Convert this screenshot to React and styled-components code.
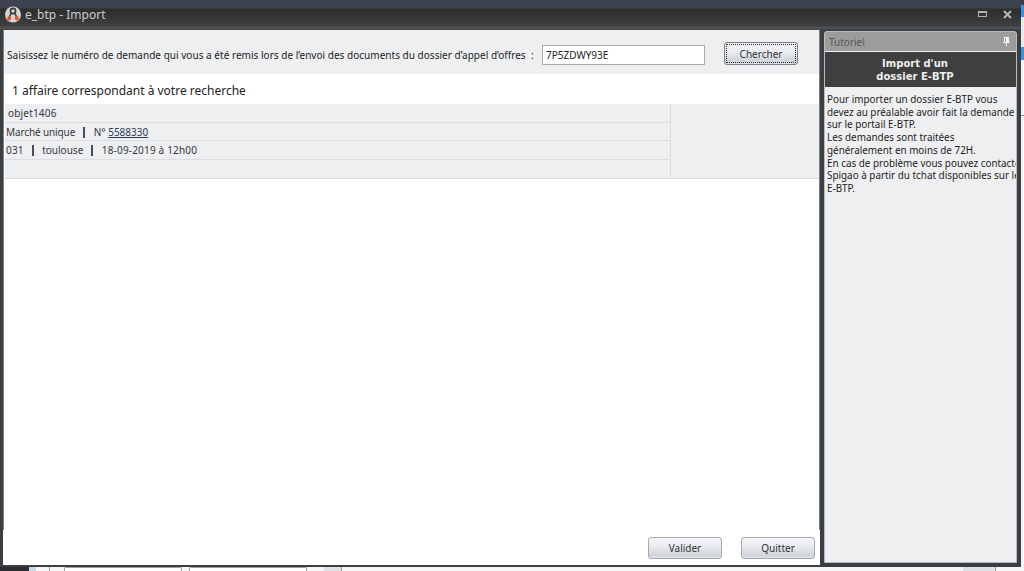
import React from 'react';
import styled, { createGlobalStyle } from 'styled-components';

const GlobalStyle = createGlobalStyle`
  html, body { margin: 0; padding: 0; background: #fff; }
  body { font-family: "Noto Sans", "Liberation Sans", sans-serif; overflow: hidden; }
`;

const tutorialLines = [
  'Pour importer un dossier E-BTP vous',
  'devez au préalable avoir fait la demande',
  'sur le portail E-BTP.',
  'Les demandes sont traitées',
  'généralement en moins de 72H.',
  'En cas de problème vous pouvez contacter',
  'Spigao à partir du tchat disponibles sur le',
  'E-BTP.',
];

const AppIcon = () => (
  <svg width="16" height="17" viewBox="0 0 16 17">
    <circle cx="8" cy="8.5" r="8" fill="#d4d4d4" />
    <circle cx="8" cy="5" r="2.6" fill="none" stroke="#3a3a3a" strokeWidth="1.6" />
    <path d="M6.2 7 L4.4 11 M9.8 7 L11.6 11" stroke="#3a3a3a" strokeWidth="1.5" fill="none" />
    <ellipse cx="4.2" cy="12.2" rx="2" ry="2.2" fill="#e0562a" />
    <ellipse cx="11.8" cy="12.2" rx="2" ry="2.2" fill="#e0562a" />
  </svg>
);

const RestoreIcon = () => (
  <svg width="9" height="6" viewBox="0 0 9 6">
    <rect x="0.5" y="0.5" width="8" height="5" fill="none" stroke="#aeb2b7" />
    <rect x="0" y="0" width="9" height="2" fill="#aeb2b7" />
  </svg>
);

const CloseIcon = () => (
  <svg width="9" height="9" viewBox="0 0 9 9">
    <path d="M1 1 L8 8 M8 1 L1 8" stroke="#b4b8bc" strokeWidth="2" />
  </svg>
);

const PinIcon = () => (
  <svg width="7" height="9" viewBox="0 0 7 9">
    <path d="M1 0 h5 v5 h1 v1 h-3 v3 h-1 v-3 h-3 v-1 h1 Z M2 1 v4 h1 v-4 Z" fill="#f4f4f4" fillRule="evenodd" />
  </svg>
);

export default function App() {
  return (
    <Screen>
      <GlobalStyle />
      <Upper>
        <Window>
          <TitleBar>
            <AppIcon />
            <TitleText>e_btp - Import</TitleText>
            <WindowButtons>
              <RestoreIcon />
              <CloseIcon />
            </WindowButtons>
          </TitleBar>
          <Body>
            <Main>
              <Content>
                <SearchBar>
                  <SearchLabel>Saisissez le numéro de demande qui vous a été remis lors de l’envoi des documents du dossier d’appel d’offres&nbsp;&nbsp;:</SearchLabel>
                  <SearchInput defaultValue="7P5ZDWY93E" />
                  <SearchButton>Chercher</SearchButton>
                </SearchBar>
                <ResultTitle>1 affaire correspondant à votre recherche</ResultTitle>
                <ResultTable>
                  <ResultRows>
                    <Row $indent={3}>
                      <Spaced $ls={0.18}>objet1406</Spaced>
                    </Row>
                    <Row>
                      <Spaced $ls={-0.12}>Marché unique</Spaced>
                      <Sep />
                      N° <Ref>5588330</Ref>
                    </Row>
                    <Row>
                      <Spaced $ls={0.18}>031</Spaced>
                      <Sep />
                      toulouse
                      <Sep />
                      <Spaced $ls={0.18}>18-09-2019 à 12h00</Spaced>
                    </Row>
                    <Row />
                  </ResultRows>
                  <ResultSide />
                </ResultTable>
              </Content>
              <Footer>
                <Button>Valider</Button>
                <Button>Quitter</Button>
              </Footer>
            </Main>
            <Tutorial>
              <TutorialHeader>
                <span>Tutoriel</span>
                <PinIcon />
              </TutorialHeader>
              <TutorialTitle>
                Import d'un
                <br />
                dossier E-BTP
              </TutorialTitle>
              <TutorialText>
                {tutorialLines.map((line) => (
                  <div key={line}>{line}</div>
                ))}
              </TutorialText>
            </Tutorial>
          </Body>
        </Window>
        <DesktopEdge />
      </Upper>
      <Taskbar>
        <TaskDark />
        <TaskBlue />
        <TaskCell $w={13} />
        <TaskField $w={118} $gap={14} />
        <TaskField $w={118} $gap={7} />
        <TaskCell $w={17} $gap={17} $grey />
        <TaskCell $w={32} $gap={621} $grey />
      </Taskbar>
    </Screen>
  );
}

const Screen = styled.div`
  width: 1024px;
  height: 571px;
  display: flex;
  flex-direction: column;
  overflow: hidden;
`;

const Upper = styled.div`
  height: 567px;
  display: flex;
`;

const Window = styled.div`
  width: 1021px;
  display: flex;
  flex-direction: column;
  background: #3b3e42;
`;

const DesktopEdge = styled.div`
  flex: 1;
  background: linear-gradient(
    #3a3f4a 0 5px,
    #3f8fe0 5px 17px,
    #e9ebec 17px 47px,
    #3f8fe0 47px 60px,
    #f6f6f6 60px 115px,
    #8d8d8d 115px 116px,
    #f6f6f6 116px
  );
`;

const TitleBar = styled.div`
  height: 30px;
  box-sizing: border-box;
  padding: 6px 9px 0 5px;
  display: flex;
  align-items: flex-start;
  gap: 4px;
  background: linear-gradient(#3d4350 0, #3d4350 8px, #2c2d2d 9px, #3f3f3f 26px, #55585b 28px, #3b3e42 30px);
`;

const TitleText = styled.span`
  color: #c9cbce;
  font-size: 12px;
  line-height: 17px;
`;

const WindowButtons = styled.div`
  margin-left: auto;
  margin-top: -1px;
  display: flex;
  align-items: center;
  gap: 16px;
  height: 18px;
`;

const Body = styled.div`
  height: 535px;
  display: flex;
  padding: 0 4px 2px 3px;
  gap: 4px;
`;

const Main = styled.div`
  width: 817px;
  display: flex;
  flex-direction: column;
  background: #fff;
`;

const Content = styled.div`
  flex: 1;
  border-left: 1px solid #7c7f83;
  border-right: 1px solid #7c7f83;
`;

const SearchBar = styled.div`
  height: 44px;
  box-sizing: border-box;
  padding: 0 0 9px 3px;
  display: flex;
  align-items: flex-end;
  background: #eeeff1;
`;

const SearchLabel = styled.span`
  width: 535px;
  line-height: 20px;
  font-size: 10px;
  letter-spacing: 0.02px;
  word-spacing: 0.02px;
  color: #1c1c1c;
  white-space: nowrap;
`;

const SearchInput = styled.input`
  width: 163px;
  height: 20px;
  box-sizing: border-box;
  border: 1px solid #a9abad;
  padding: 0 3px;
  font-family: inherit;
  font-size: 10px;
  color: #222;
  background: #fff;
`;

const Button = styled.button`
  width: 74px;
  height: 22px;
  padding: 0;
  border: 1px solid #a6a9ad;
  border-radius: 3px;
  font-family: inherit;
  font-size: 10px;
  color: #30343a;
  background: linear-gradient(#f3f4f6, #e9ebee 45%, #cfd5dc 85%, #dfe3e8);
`;

const SearchButton = styled(Button)`
  height: 23px;
  margin-left: 19px;
  border-color: #7d8085;
  outline: 1px dotted #222;
  outline-offset: -3px;
`;

const ResultTitle = styled.div`
  height: 30px;
  line-height: 34px;
  padding-left: 8px;
  font-size: 12px;
  color: #222;
`;

const ResultTable = styled.div`
  display: flex;
  margin-left: 1px;
  background: #eeeff1;
  border-bottom: 1px solid #dcdde0;
`;

const ResultRows = styled.div`
  width: 665px;
  border-right: 1px solid #dcdde0;
`;

const ResultSide = styled.div`
  flex: 1;
`;

const Row = styled.div`
  height: 18.5px;
  line-height: 18px;
  box-sizing: border-box;
  padding-left: ${(p) => p.$indent || 1}px;
  font-size: 10px;
  color: #33373d;
  border-bottom: 1px solid #dcdde0;
  white-space: nowrap;
  &:last-child { border-bottom: 0; }
`;

const Spaced = styled.span`
  letter-spacing: ${(p) => p.$ls}px;
`;

const Sep = styled.span`
  display: inline-block;
  width: 2px;
  height: 11px;
  margin: 0 8.5px 0 8px;
  vertical-align: -2px;
  background: #46505c;
`;

const Ref = styled.span`
  color: #2d3a58;
  text-decoration: underline;
`;

const Footer = styled.div`
  height: 35px;
  box-sizing: border-box;
  padding: 7px 5px 0 0;
  display: flex;
  align-items: flex-start;
  justify-content: flex-end;
  gap: 19px;
`;

const Tutorial = styled.div`
  width: 193px;
  margin: 1px 0 2px;
  box-sizing: border-box;
  display: flex;
  flex-direction: column;
  overflow: hidden;
  background: #eeeff1;
  border: 1px solid #b9bcbf;
  border-radius: 3px 3px 0 0;
`;

const TutorialHeader = styled.div`
  height: 20px;
  flex: none;
  box-sizing: border-box;
  padding: 0 6px 0 4px;
  display: flex;
  align-items: center;
  justify-content: space-between;
  font-size: 10px;
  color: #55585b;
  background: #9b9c9b;
  border-bottom: 1px solid #eeeff1;
`;

const TutorialTitle = styled.div`
  height: 35px;
  flex: none;
  padding: 1px 11px 0 0;
  box-sizing: border-box;
  text-align: center;
  font-family: "DejaVu Sans", sans-serif;
  font-weight: bold;
  font-size: 10px;
  line-height: 13px;
  color: #eee;
  background: #3f3f3f;
  display: flex;
  align-items: center;
  justify-content: center;
`;

const TutorialText = styled.div`
  padding: 6px 0 0 2px;
  font-size: 9.9px;
  line-height: 12.7px;
  color: #1c1c1c;
  white-space: nowrap;
`;

const Taskbar = styled.div`
  flex: 1;
  display: flex;
  background: #f6f6f6;
`;

const TaskDark = styled.div`
  width: 29px;
  background: #2b2d30;
`;

const TaskBlue = styled.div`
  width: 7px;
  background: #c6dbe8;
`;

const TaskCell = styled.div`
  width: ${(p) => p.$w}px;
  margin-left: ${(p) => p.$gap || 0}px;
  background: ${(p) => (p.$grey ? '#dfe2e4' : 'transparent')};
  border-right: 1px solid #9a9a9a;
`;

const TaskField = styled.div`
  width: ${(p) => p.$w}px;
  margin-left: ${(p) => p.$gap}px;
  box-sizing: border-box;
  border: 1px solid #a0a0a0;
  border-bottom: 0;
  border-radius: 2px 2px 0 0;
  background: #fff;
`;
